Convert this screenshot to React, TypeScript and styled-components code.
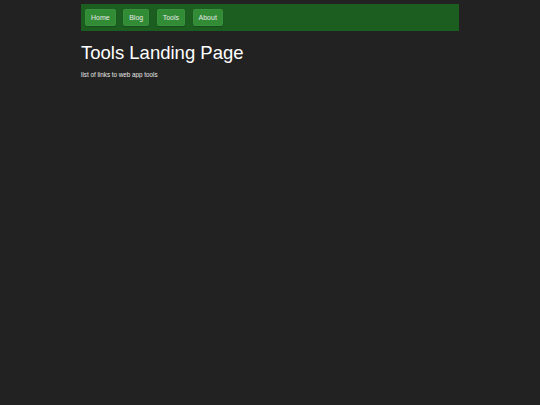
import React from 'react';
import styled, { createGlobalStyle } from 'styled-components';

const GlobalStyle = createGlobalStyle`
  html, body {
    margin: 0;
    padding: 0;
    background: #222222;
    color: #ffffff;
    font-family: "Liberation Sans", Arial, sans-serif;
  }
`;

const Page = styled.div`
  width: 70%;
  margin: 0 auto;
  padding-top: 4px;
`;

const NavBar = styled.nav`
  display: flex;
  gap: 7.5px;
  align-items: center;
  height: 27px;
  padding: 0 4px;
  background: #1b5e20;
  box-sizing: border-box;
`;

const NavButton = styled.a`
  display: flex;
  align-items: center;
  height: 17px;
  padding: 0 5px;
  box-sizing: border-box;
  background: #328c36;
  border: 1px solid rgba(255, 255, 255, 0.03);
  border-radius: 2px;
  box-shadow: 0 1px 1px rgba(0, 0, 0, 0.2);
  color: #e6e6e6;
  font-size: 7px;
  text-decoration: none;
  cursor: pointer;
`;

const Title = styled.h1`
  margin: 10px 0 0;
  font-size: 18.5px;
  font-weight: normal;
  line-height: 24px;
`;

const Subtitle = styled.p`
  margin: 6px 0 0;
  font-size: 6.3px;
  color: #e8e8e8;
`;

const links = ['Home', 'Blog', 'Tools', 'About'];

export default function App() {
  return (
    <>
      <GlobalStyle />
      <Page>
        <NavBar>
          {links.map((label) => (
            <NavButton key={label}>{label}</NavButton>
          ))}
        </NavBar>
        <Title>Tools Landing Page</Title>
        <Subtitle>list of links to web app tools</Subtitle>
      </Page>
    </>
  );
}
